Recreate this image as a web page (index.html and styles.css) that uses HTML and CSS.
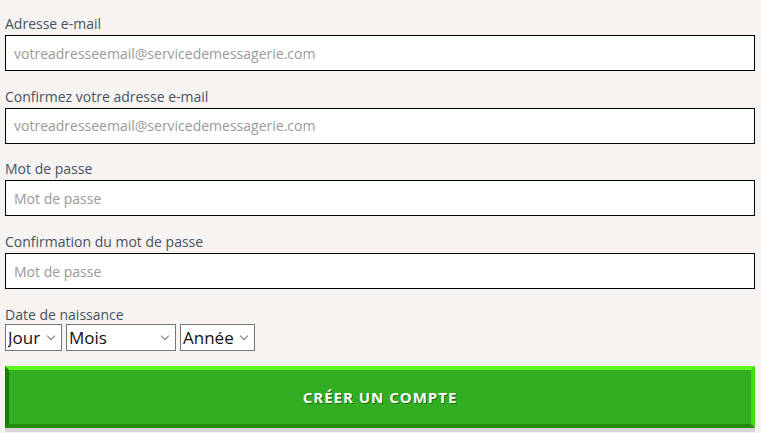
FILE: index.html
```html
<!DOCTYPE html>
<html lang="fr">
<head>
    <meta charset="UTF-8">
    <meta name="viewport" content="width=device-width, initial-scale=1.0">
    <title>Créer un compte</title>
    <link rel="stylesheet" href="styles.css">
</head>
<body>
    <form class="signup-form">
        <div class="form-group">
            <label for="email">Adresse e-mail</label>
            <input type="email" id="email" placeholder="votreadresseemail@servicedemessagerie.com">
        </div>
        <div class="form-group">
            <label for="email-confirm">Confirmez votre adresse e-mail</label>
            <input type="email" id="email-confirm" placeholder="votreadresseemail@servicedemessagerie.com">
        </div>
        <div class="form-group">
            <label for="password">Mot de passe</label>
            <input type="password" id="password" placeholder="Mot de passe">
        </div>
        <div class="form-group">
            <label for="password-confirm">Confirmation du mot de passe</label>
            <input type="password" id="password-confirm" placeholder="Mot de passe">
        </div>
        <div class="form-group birth">
            <label for="day">Date de naissance</label>
            <div class="birth-selects">
                <span class="select-wrap sel-day">
                    <select id="day">
                        <option>Jour</option>
                    </select>
                </span>
                <span class="select-wrap sel-month">
                    <select id="month">
                        <option>Mois</option>
                    </select>
                </span>
                <span class="select-wrap sel-year">
                    <select id="year">
                        <option>Année</option>
                    </select>
                </span>
            </div>
        </div>
        <button type="submit" class="submit-btn">Créer un compte</button>
    </form>
</body>
</html>
```

FILE: styles.css
```css
* {
    box-sizing: border-box;
    margin: 0;
    padding: 0;
}

body {
    background-color: #f6f3f1;
    font-family: 'Open Sans', sans-serif;
    color: #475265;
}

.signup-form {
    padding: 14px 6px 10px 5px;
}

.form-group {
    margin-bottom: 15.7px;
}

.form-group label {
    display: block;
    font-size: 14px;
    line-height: normal;
    margin-bottom: 2px;
}

.form-group input {
    display: block;
    width: 100%;
    height: 36px;
    padding: 0 8px;
    border: 1px solid #000;
    background: #fff;
    font-family: 'Open Sans', sans-serif;
    font-size: 14px;
    color: #333;
    outline: none;
}

.form-group input::placeholder {
    color: #999;
}

.birth {
    margin-bottom: 15px;
}

.birth label {
    margin-bottom: 0;
}

.birth-selects {
    display: flex;
    gap: 4px;
}

.select-wrap {
    position: relative;
    display: block;
}

.select-wrap select {
    display: block;
    width: 100%;
    height: 27px;
    appearance: none;
    border: 1px solid #767676;
    border-radius: 0;
    background: #fff;
    font-family: 'Open Sans', sans-serif;
    font-size: 17px;
    color: #111;
    padding: 0 0 0 2px;
    outline: none;
}

/* thin chevron */
.select-wrap::after {
    content: '';
    position: absolute;
    right: 8px;
    top: 9px;
    width: 5px;
    height: 5px;
    border-right: 1px solid #777;
    border-bottom: 1px solid #777;
    transform: rotate(45deg);
    pointer-events: none;
}

.sel-day {
    width: 57px;
}

.sel-month {
    width: 110px;
}

.sel-year {
    width: 75px;
}

.submit-btn {
    display: block;
    width: 750px;
    height: 62px;
    background-color: #33ad21;
    border-style: solid;
    border-width: 4px;
    border-top-color: #5df71f;
    border-left-color: #1b7a0c;
    border-right-color: #45d90f;
    border-bottom-color: #238b0b;
    box-shadow: 0 4px 0 #d6d4d3;
    color: #fff;
    font-family: 'Open Sans', sans-serif;
    font-weight: bold;
    font-size: 15px;
    letter-spacing: 1px;
    text-transform: uppercase;
    text-shadow: 1px 1px 0 #1e6a12;
    cursor: pointer;
}
```
